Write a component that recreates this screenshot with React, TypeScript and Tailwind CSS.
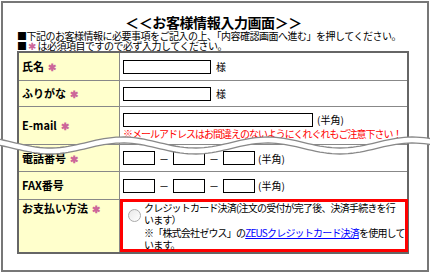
import React from "react"

// wavy "torn" band that hides part of the form
function wavePath(offset: number) {
  const pts: string[] = []
  for (let x = -4; x <= 436; x += 4) {
    const y = 142.5 + offset + 5.5 * Math.sin(((x - 50) / 145) * Math.PI * 2 + Math.PI / 2)
    pts.push(`${x},${y.toFixed(2)}`)
  }
  return pts
}

function Wave() {
  const top = wavePath(0)
  const bottom = wavePath(6)
  const band = `M${top.join(" L")} L${[...bottom].reverse().join(" L")} Z`
  return (
    <svg className="absolute left-0 top-0 pointer-events-none" width="430" height="272">
      <path d={band} fill="#fff" />
      <path d={`M${top.join(" L")}`} fill="none" stroke="#888" strokeWidth="1.3" />
      <path d={`M${bottom.join(" L")}`} fill="none" stroke="#888" strokeWidth="1.3" />
    </svg>
  )
}

const Req = () => <span className="ml-[4px] text-[#cc6699] text-[10px]">✱</span>

function Row({ label, req, h, children }: { label: string; req?: boolean; h: string; children: React.ReactNode }) {
  return (
    <div className={`flex border-b border-[#888] ${h}`}>
      <div className="w-[101px] shrink-0 bg-[#ffffcc] border-r border-[#888] flex items-center pl-[3px] text-[11px] font-bold">
        {label}
        {req && <Req />}
      </div>
      <div className="flex-1 flex items-center pl-[3px]">{children}</div>
    </div>
  )
}

const Box = ({ w }: { w: string }) => <div className={`${w} h-[14px] border border-black bg-white`} />
const Dash = () => <span className="w-[18px] text-center text-[10px]">－</span>

export default function App() {
  return (
    <div className="relative w-[430px] h-[272px] bg-white overflow-hidden text-black font-['Noto_Sans_CJK_JP','Liberation_Sans',sans-serif]">
      <div className="ml-px mt-px w-[428px] h-[271px] border-2 border-[#777] pl-[14px] pt-[11px]">
        <h1 className="h-[16px] text-center text-[14px] leading-[16px] font-bold tracking-[-0.4px] pr-[17px]">＜＜お客様情報入力画面＞＞</h1>
        <p className="h-[11px] text-[10px] leading-[11px] tracking-[-0.5px] whitespace-nowrap">■下記のお客様情報に必要事項をご記入の上、「内容確認画面へ進む」を押してください。</p>
        <p className="h-[10px] text-[10px] leading-[10px] tracking-[-0.5px] whitespace-nowrap">
          ■ <span className="text-[#cc6699]">✱</span> は必須項目ですので必ず入力してください。
        </p>

        <div className="w-[392px] border-2 border-[#666]">
          <Row label="氏名" req h="h-[28px]">
            <Box w="w-[88px]" />
            <span className="ml-[5px] text-[10px]">様</span>
          </Row>
          <Row label="ふりがな" req h="h-[26px]">
            <Box w="w-[88px]" />
            <span className="ml-[5px] text-[10px]">様</span>
          </Row>
          <Row label="E-mail" req h="h-[38px]">
            <div className="flex flex-col pt-[2px]">
              <div className="flex items-center">
                <Box w="w-[190px]" />
                <span className="ml-[4px] text-[10px] leading-[14px]">(半角)</span>
              </div>
              <p className="text-[10px] leading-[13px] text-[#ff0000] tracking-[-1px] whitespace-nowrap">※メールアドレスはお間違えのないようにくれぐれもご注意下さい！</p>
            </div>
          </Row>
          <Row label="電話番号" req h="h-[27px]">
            <Box w="w-[32px]" />
            <Dash />
            <Box w="w-[32px]" />
            <Dash />
            <Box w="w-[32px]" />
            <span className="ml-[3px] text-[10px]">(半角)</span>
          </Row>
          <Row label="FAX番号" h="h-[28px]">
            <Box w="w-[32px]" />
            <Dash />
            <Box w="w-[32px]" />
            <Dash />
            <Box w="w-[32px]" />
            <span className="ml-[3px] text-[10px]">(半角)</span>
          </Row>
          <div className="flex h-[52px]">
            <div className="w-[101px] shrink-0 bg-[#ffffcc] border-r border-[#888] pl-[3px] pt-[2px] text-[11px] font-bold leading-[12px]">
              お支払い方法
              <Req />
            </div>
            <div className="flex-1 -mt-px -mr-px border-[3px] border-[#ff0000] flex items-start pl-[5px]">
              <div className="mt-[7px] w-[13px] h-[13px] shrink-0 rounded-full border border-[#aaa] bg-gradient-to-br from-[#e8e8e8] to-white" />
              <div className="ml-[3px] text-[10px] leading-[12.3px] tracking-[-0.8px] whitespace-nowrap">
                <p>クレジットカード決済(注文の受付が完了後、決済手続きを行</p>
                <p>います）</p>
                <p>
                  ※「株式会社ゼウス」の<a className="text-[#0000ff] underline">ZEUSクレジットカード決済</a>を使用して
                </p>
                <p>います。</p>
              </div>
            </div>
          </div>
        </div>
      </div>
      <Wave />
    </div>
  )
}
